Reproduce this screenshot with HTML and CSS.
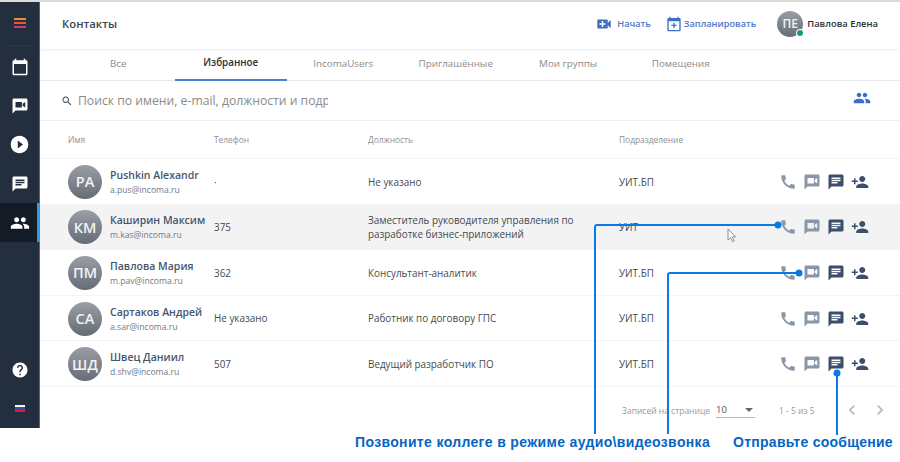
FILE: index.html
```html
<!DOCTYPE html>
<html lang="ru">
<head>
<meta charset="utf-8">
<title>Контакты</title>
<link rel="stylesheet" href="styles.css">
</head>
<body>
<svg class="sprite" xmlns="http://www.w3.org/2000/svg">
  <symbol id="i-cal" viewBox="0 0 24 24"><path d="M20 3h-1V1h-2v2H7V1H5v2H4c-1.1 0-2 .9-2 2v16c0 1.1.9 2 2 2h16c1.1 0 2-.9 2-2V5c0-1.1-.9-2-2-2zm0 18H4V8h16v13z"/></symbol>
  <symbol id="i-chatvideo" viewBox="0 0 24 24"><path fill-rule="evenodd" d="M20 2H4c-1.1 0-2 .9-2 2v18l4-4h14c1.1 0 2-.9 2-2V4c0-1.1-.9-2-2-2zM6 6.500h8.500v7.500H6zM15.500 9l3.500-2.500v7.500l-3.500-2.500z"/></symbol>
  <symbol id="i-play" viewBox="0 0 24 24"><path d="M12 2C6.480 2 2 6.480 2 12s4.480 10 10 10 10-4.480 10-10S17.520 2 12 2zm-2 14.500v-9l6 4.500-6 4.500z"/></symbol>
  <symbol id="i-chat" viewBox="0 0 24 24"><path d="M20 2H4c-1.100 0-1.990.9-1.990 2L2 22l4-4h14c1.100 0 2-.9 2-2V4c0-1.100-.9-2-2-2zM6 9h12v2H6V9zm8 5H6v-2h8v2zm4-6H6V6h12v2z"/></symbol>
  <symbol id="i-people" viewBox="0 0 24 24"><path d="M16 11c1.660 0 2.990-1.340 2.990-3S17.660 5 16 5c-1.660 0-3 1.340-3 3s1.340 3 3 3zm-8 0c1.660 0 2.990-1.340 2.990-3S9.660 5 8 5C6.340 5 5 6.340 5 8s1.340 3 3 3zm0 2c-2.330 0-7 1.170-7 3.500V19h14v-2.500c0-2.330-4.670-3.500-7-3.500zm8 0c-.29 0-.62.02-.97.05 1.160.84 1.970 1.970 1.970 3.450V19h6v-2.500c0-2.330-4.670-3.500-7-3.500z"/></symbol>
  <symbol id="i-help" viewBox="0 0 24 24"><path d="M12 2C6.480 2 2 6.480 2 12s4.480 10 10 10 10-4.480 10-10S17.520 2 12 2zm1 17h-2v-2h2v2zm2.070-7.750l-.9.92C13.450 12.900 13 13.500 13 15h-2v-.5c0-1.100.45-2.100 1.170-2.830l1.240-1.260c.37-.36.59-.86.59-1.410 0-1.100-.9-2-2-2s-2 .9-2 2H8c0-2.210 1.790-4 4-4s4 1.790 4 4c0 .88-.36 1.680-.93 2.250z"/></symbol>
  <symbol id="i-phone" viewBox="0 0 24 24"><path d="M20.010 15.380c-1.230 0-2.420-.2-3.530-.56-.35-.12-.74-.03-1.010.24l-1.570 1.970c-2.830-1.350-5.480-3.900-6.890-6.830l1.950-1.660c.27-.28.35-.67.24-1.020-.37-1.110-.56-2.300-.56-3.530 0-.54-.45-.99-.99-.99H4.190C3.650 3 3 3.240 3 3.990 3 13.280 10.730 21 20.010 21c.71 0 .99-.63.99-1.180v-3.450c0-.54-.45-.99-.99-.99z"/></symbol>
  <symbol id="i-videocall" viewBox="0 0 24 24"><path d="M17 10.500V7c0-.55-.45-1-1-1H4c-.55 0-1 .45-1 1v10c0 .55.45 1 1 1h12c.55 0 1-.45 1-1v-3.500l4 4v-11l-4 4zM14 13h-3v3H9v-3H6v-2h3V8h2v3h3v2z"/></symbol>
  <symbol id="i-eventadd" viewBox="0 0 24 24"><path d="M20 3h-1V1h-2v2H7V1H5v2H4c-1.100 0-2 .9-2 2v16c0 1.100.9 2 2 2h16c1.100 0 2-.9 2-2V5c0-1.100-.9-2-2-2zm0 18H4V8h16v13zM11 10h2v3h3v2h-3v3h-2v-3H8v-2h3z"/></symbol>
  <symbol id="i-addperson" viewBox="0 0 24 24"><path d="M15 12c2.210 0 4-1.790 4-4s-1.790-4-4-4-4 1.790-4 4 1.790 4 4 4zm-9-2V7H4v3H1v2h3v3h2v-3h3v-2H6zm9 4c-2.670 0-8 1.340-8 4v2h16v-2c0-2.660-5.330-4-8-4z"/></symbol>
  <symbol id="i-search" viewBox="0 0 24 24"><path d="M15.500 14h-.79l-.28-.27C15.410 12.590 16 11.110 16 9.500 16 5.910 13.090 3 9.500 3S3 5.910 3 9.500 5.910 16 9.500 16c1.610 0 3.090-.59 4.230-1.570l.27.28v.79l5 4.990L20.490 19l-4.990-5zm-6 0C7.010 14 5 11.990 5 9.500S7.010 5 9.500 5 14 7.010 14 9.500 11.990 14 9.500 14z"/></symbol>
  <symbol id="i-left" viewBox="0 0 24 24"><path d="M15.410 7.410L14 6l-6 6 6 6 1.410-1.410L10.830 12z"/></symbol>
  <symbol id="i-right" viewBox="0 0 24 24"><path d="M10 6L8.590 7.410 13.170 12l-4.580 4.590L10 18l6-6z"/></symbol>
</svg>

<div class="app">
  <nav class="sidebar">
    <div class="burger"><span class="b1"></span><span class="b2"></span><span class="b3"></span></div>
    <a class="nav-item"><svg class="nav-icon"><use href="#i-cal"/></svg></a>
    <a class="nav-item"><svg class="nav-icon"><use href="#i-chatvideo"/></svg></a>
    <a class="nav-item"><svg class="nav-icon nav-icon-big"><use href="#i-play"/></svg></a>
    <a class="nav-item"><svg class="nav-icon"><use href="#i-chat"/></svg></a>
    <a class="nav-item active"><svg class="nav-icon nav-icon-wide"><use href="#i-people"/></svg></a>
    <div class="spacer"></div>
    <a class="nav-item"><svg class="nav-icon"><use href="#i-help"/></svg></a>
    <div class="flag"><span class="f1"></span><span class="f2"></span><span class="f3"></span></div>
  </nav>

  <main class="main">
    <header class="topbar">
      <h1 class="title">Контакты</h1>
      <div class="top-actions">
        <a class="top-link link-start"><svg class="top-icon top-icon-video"><use href="#i-videocall"/></svg>Начать</a>
        <a class="top-link link-plan"><svg class="top-icon"><use href="#i-eventadd"/></svg>Запланировать</a>
        <div class="me">
          <div class="avatar">ПЕ<span class="status"></span></div>
          <span class="me-name">Павлова Елена</span>
        </div>
      </div>
    </header>

    <div class="tabs">
      <a class="tab">Все</a>
      <a class="tab current">Избранное</a>
      <a class="tab">IncomaUsers</a>
      <a class="tab">Приглашённые</a>
      <a class="tab">Мои группы</a>
      <a class="tab">Помещения</a>
    </div>

    <div class="searchbar">
      <svg class="search-icon"><use href="#i-search"/></svg>
      <input class="search-input" type="text" placeholder="Поиск по имени, e-mail, должности и подразделению">
      <svg class="group-icon"><use href="#i-people"/></svg>
    </div>

    <div class="table-head row-grid">
      <span>Имя</span><span>Телефон</span><span>Должность</span><span>Подразделение</span>
    </div>

    <div class="row row-grid">
      <div class="person"><div class="avatar">PA</div><div class="who"><div class="name">Pushkin Alexandr</div><div class="mail">a.pus@incoma.ru</div></div></div>
      <div class="cell">·</div>
      <div class="cell">Не указано</div>
      <div class="cell">УИТ.БП</div>
      <div class="acts"><svg class="act muted"><use href="#i-phone"/></svg><svg class="act muted"><use href="#i-chatvideo"/></svg><svg class="act dark"><use href="#i-chat"/></svg><svg class="act dark"><use href="#i-addperson"/></svg></div>
    </div>
    <div class="row row-grid hover">
      <div class="person"><div class="avatar">КМ</div><div class="who"><div class="name">Каширин Максим</div><div class="mail">m.kas@incoma.ru</div></div></div>
      <div class="cell">375</div>
      <div class="cell">Заместитель руководителя управления по разработке бизнес-приложений</div>
      <div class="cell">УИТ</div>
      <div class="acts"><svg class="act muted"><use href="#i-phone"/></svg><svg class="act muted"><use href="#i-chatvideo"/></svg><svg class="act dark"><use href="#i-chat"/></svg><svg class="act dark"><use href="#i-addperson"/></svg></div>
    </div>
    <div class="row row-grid">
      <div class="person"><div class="avatar">ПМ</div><div class="who"><div class="name">Павлова Мария</div><div class="mail">m.pav@incoma.ru</div></div></div>
      <div class="cell">362</div>
      <div class="cell">Консультант-аналитик</div>
      <div class="cell">УИТ.БП</div>
      <div class="acts"><svg class="act muted"><use href="#i-phone"/></svg><svg class="act muted"><use href="#i-chatvideo"/></svg><svg class="act dark"><use href="#i-chat"/></svg><svg class="act dark"><use href="#i-addperson"/></svg></div>
    </div>
    <div class="row row-grid">
      <div class="person"><div class="avatar">СА</div><div class="who"><div class="name">Сартаков Андрей</div><div class="mail">a.sar@incoma.ru</div></div></div>
      <div class="cell">Не указано</div>
      <div class="cell">Работник по договору ГПС</div>
      <div class="cell">УИТ.БП</div>
      <div class="acts"><svg class="act muted"><use href="#i-phone"/></svg><svg class="act muted"><use href="#i-chatvideo"/></svg><svg class="act dark"><use href="#i-chat"/></svg><svg class="act dark"><use href="#i-addperson"/></svg></div>
    </div>
    <div class="row row-grid">
      <div class="person"><div class="avatar">ШД</div><div class="who"><div class="name">Швец Даниил</div><div class="mail">d.shv@incoma.ru</div></div></div>
      <div class="cell">507</div>
      <div class="cell">Ведущий разработчик ПО</div>
      <div class="cell">УИТ.БП</div>
      <div class="acts"><svg class="act muted"><use href="#i-phone"/></svg><svg class="act muted"><use href="#i-chatvideo"/></svg><svg class="act dark"><use href="#i-chat"/></svg><svg class="act dark"><use href="#i-addperson"/></svg></div>
    </div>

    <footer class="pager">
      <span class="pager-label">Записей на странице</span>
      <div class="pager-select"><span>10</span><i class="caret"></i></div>
      <span class="pager-range">1 - 5 из 5</span>
      <svg class="pager-arrow"><use href="#i-left"/></svg>
      <svg class="pager-arrow"><use href="#i-right"/></svg>
    </footer>
  </main>
</div>

<div class="captions">
  <span class="cap-one">Позвоните коллеге в режиме аудио\видеозвонка</span>
  <span class="cap-two">Отправьте сообщение</span>
</div>

<svg class="overlay" viewBox="0 0 900 462" xmlns="http://www.w3.org/2000/svg">
  <g class="callout">
    <path d="M778 225H597q-2 0-2 2V434"/>
    <path d="M799 273H670q-2 0-2 2V434"/>
    <path d="M837 373V435"/>
  </g>
  <circle class="dot" cx="778" cy="225" r="3.500"/>
  <circle class="dot" cx="799" cy="273" r="3.500"/>
  <circle class="dot" cx="837" cy="373" r="3.500"/>
  <path class="cursor" d="M728 229v11l2.500-2.300 2 4 1.800-.9-2-3.900h3.300z"/>
</svg>
</body>
</html>
```
FILE: styles.css
```css
* { box-sizing: border-box; }
html, body { margin: 0; padding: 0; background: #fff; }
body {
  position: relative;
  width: 900px;
  height: 462px;
  overflow: hidden;
  font-family: "Open Sans", "Noto Sans", sans-serif;
  color: #3f4650;
}
.sprite { display: none; }

.app {
  display: flex;
  height: 428px;
  border-top: 2px solid #dcdcdc;
}

/* sidebar */
.sidebar {
  flex: 0 0 40px;
  display: flex;
  flex-direction: column;
  background: #232f3e;
  border-right: 1px solid #5b6470;
}
.burger {
  height: 44px;
  padding-top: 16px;
  display: flex;
  flex-direction: column;
  align-items: center;
  gap: 2px;
  margin: 0 6px;
  border-bottom: 1px solid #2e3a49;
}
.burger span { display: block; width: 12px; height: 2px; }
.b1 { background: #ef8a3c; }
.b2 { background: #e8553e; }
.b3 { background: #d8386f; }
.nav-item {
  height: 39px;
  display: flex;
  align-items: center;
  justify-content: center;
  flex: none;
}
.sidebar .nav-item:nth-child(2) { margin-top: 1px; }
.nav-icon { width: 18px; height: 18px; fill: #fff; }
.nav-icon-big { width: 21px; height: 21px; }
.nav-icon-wide { width: 20px; height: 20px; }
.nav-item.active {
  background: #131b26;
  border-right: 3px solid #2f9be6;
  padding-left: 3px;
  margin-right: -1px;
}
.spacer { flex: 1; }
.flag {
  display: flex;
  flex-direction: column;
  align-self: center;
  width: 10px;
  margin: 16px 0 16px;
}
.flag span { display: block; height: 2.330px; }
.f1 { background: #f4f4f4; }
.f2 { background: #2f4fb0; }
.f3 { background: #d8232f; }

/* main */
.main { flex: 1; min-width: 0; display: flex; flex-direction: column; }
.topbar {
  height: 47px;
  flex: none;
  display: flex;
  align-items: center;
  justify-content: space-between;
  padding: 0 22px 4px 22px;
  box-shadow: 0 1px 3px rgba(0, 0, 0, .08);
  position: relative;
}
.title { margin: 0; font-size: 11.300px; font-weight: 600; color: #3c4858; }
.top-actions { display: flex; align-items: center; }
.top-link {
  display: flex;
  align-items: center;
  font-size: 9.200px;
  font-weight: 600;
  color: #4a78c8;
}
.top-icon { width: 16px; height: 16px; fill: #3f6fc4; flex: none; }
.top-icon-video { width: 18px; height: 18px; }
.link-start { gap: 4px; margin-right: 15px; }
.link-plan { gap: 2px; margin-right: 21px; }
.me { display: flex; align-items: center; gap: 4px; }
.me-name { font-size: 9.400px; font-weight: 600; color: #2b3038; }

.avatar {
  position: relative;
  flex: none;
  width: 34px;
  height: 34px;
  border-radius: 50%;
  display: flex;
  align-items: center;
  justify-content: center;
  background: linear-gradient(180deg, #9a9ea5 0%, #666c76 100%);
  color: #f2f3f5;
  font-size: 14.500px;
  font-weight: 600;
}
.me .avatar { width: 26px; height: 26px; font-size: 12px; }
.status {
  position: absolute;
  right: 0;
  bottom: 1px;
  width: 6px;
  height: 6px;
  border-radius: 50%;
  background: #13a071;
  box-shadow: 0 0 0 1px #fff;
}

.tabs {
  height: 32px;
  flex: none;
  display: grid;
  grid-template-columns: repeat(6, 112.500px);
  padding-left: 22px;
  border-bottom: 1px solid #e8e8e8;
}
.tab {
  display: flex;
  align-items: center;
  justify-content: center;
  font-size: 9.800px;
  color: #8c8c8c;
  padding-bottom: 3px;
}
.tab.current { color: #2b2f36; font-weight: 600; border-bottom: 2px solid #4f7fd0; margin-bottom: -1px; }

.searchbar {
  height: 40px;
  flex: none;
  display: flex;
  align-items: center;
  padding: 0 29px 0 21px;
  border-bottom: 1px solid #f0f0f0;
}
.search-icon { width: 12px; height: 12px; fill: #3c4858; flex: none; }
.search-input {
  width: 250px;
  margin-left: 5px;
  padding: 0;
  border: 0;
  outline: 0;
  background: transparent;
  font: 12.200px "Open Sans", "Noto Sans", sans-serif;
  color: #8a8a8a;
}
.search-input::placeholder { color: #8a8a8a; opacity: 1; }
.group-icon { width: 18px; height: 18px; fill: #3f6fc4; margin: 0 0 6px auto; }

.row-grid {
  display: grid;
  grid-template-columns: 146px 154px 251px 160px 96px;
  padding-left: 28px;
  align-items: center;
}
.table-head {
  height: 38px;
  flex: none;
  font-size: 8.400px;
  color: #8f8f8f;
  border-bottom: 1px solid #f4f4f4;
}
.row {
  height: 45.600px;
  flex: none;
  padding-top: 1px;
  border-bottom: 1px solid #f4f4f4;
}
.row.hover { background: #f3f3f3; }
.person { display: flex; align-items: center; gap: 8px; min-width: 0; white-space: nowrap; }
.who { min-width: 0; padding-top: 1px; }
.name { font-size: 10.500px; font-weight: 600; color: #47566c; line-height: 15px; }
.mail { font-size: 8.600px; color: #6f7a88; line-height: 14px; margin-top: 0; }
.cell { font-size: 9.900px; line-height: 13.500px; color: #444a52; padding: 1px 14px 0 0; }
.acts { display: flex; gap: 6px; }
.act { width: 18px; height: 18px; flex: none; }
.act.muted { fill: #8a97a8; }
.act.dark { fill: #3b4e6b; }

.pager {
  flex: 1;
  display: flex;
  align-items: center;
  font-size: 8.500px;
  color: #9a9a9a;
  padding: 6px 0 0 582px;
}
.pager-label { width: 94px; flex: none; white-space: nowrap; }
.pager-select {
  width: 39px;
  height: 16px;
  flex: none;
  display: flex;
  align-items: center;
  justify-content: space-between;
  border-bottom: 1px solid #b5b5b5;
  font-size: 9.500px;
  color: #555;
  padding-right: 2px;
}
.caret {
  width: 0;
  height: 0;
  border-left: 4.500px solid transparent;
  border-right: 4.500px solid transparent;
  border-top: 4px solid #666;
}
.pager-range { width: 63px; margin-left: 24px; flex: none; white-space: nowrap; }
.pager-arrow { width: 20px; height: 20px; fill: #b9b9b9; flex: none; margin-right: 8px; }

/* annotations */
.captions {
  display: flex;
  padding: 6px 0 0 355px;
  font-family: "Liberation Sans", Arial, sans-serif;
  font-size: 14px;
  font-weight: 700;
  letter-spacing: .35px;
  color: #0565c4;
  white-space: nowrap;
}
.cap-two { margin-left: 23px; letter-spacing: .25px; }

.overlay { position: absolute; left: 0; top: 0; width: 900px; height: 462px; pointer-events: none; }
.callout { fill: none; stroke: #0a78e6; stroke-width: 2; }
.dot { fill: #0a78e6; }
.cursor { fill: #fff; stroke: #8c8c8c; stroke-width: 1; }
```
